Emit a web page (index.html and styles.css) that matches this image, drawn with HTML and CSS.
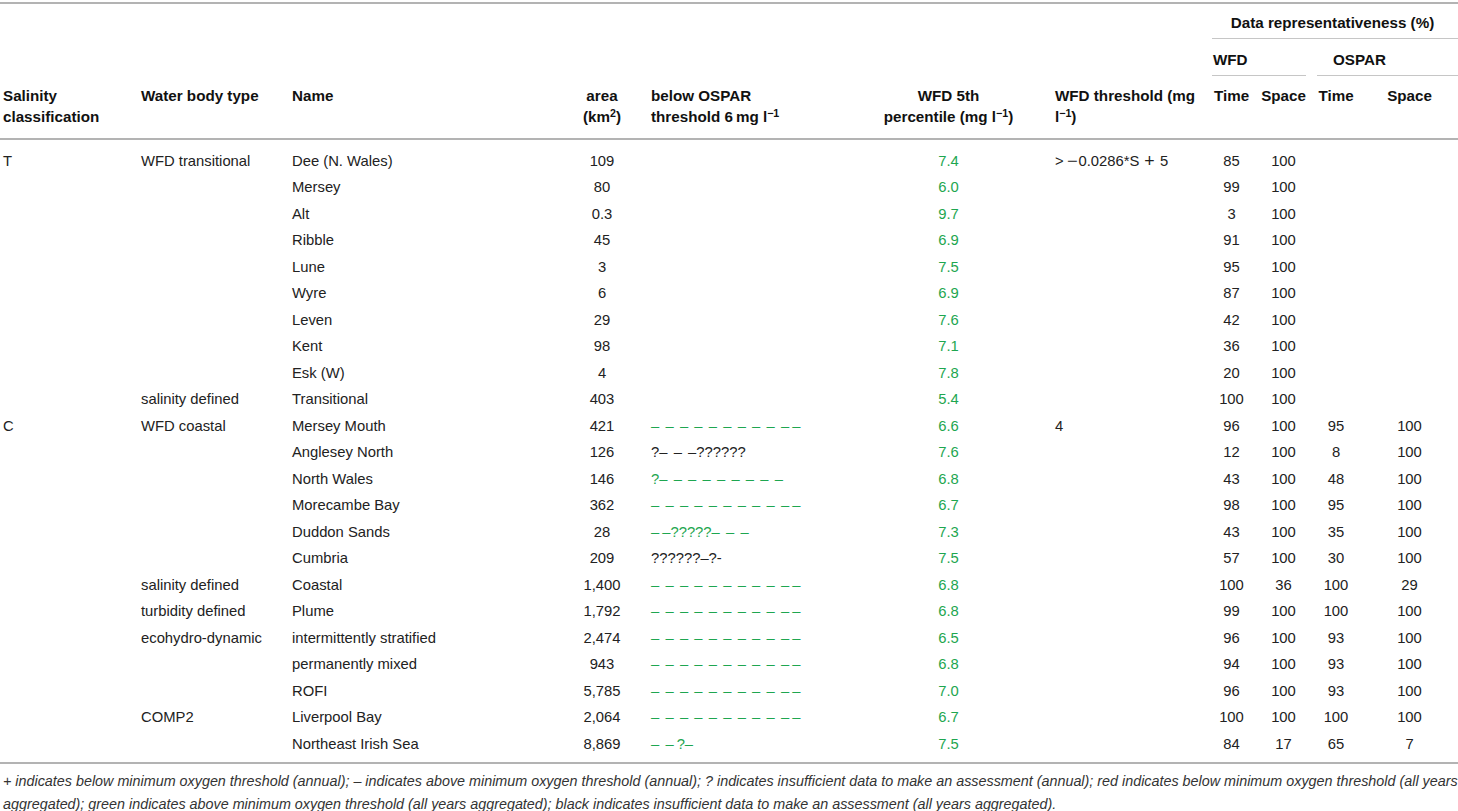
FILE: index.html
```html
<!DOCTYPE html>
<html lang="en">
<head>
<meta charset="utf-8">
<title>Table</title>
<link rel="stylesheet" href="styles.css">
</head>
<body>
<div class="page">
<table class="data">
<colgroup>
<col class="w1"><col class="w2"><col class="w3"><col class="w4"><col class="w5"><col class="w6"><col class="w7"><col class="w8"><col class="w9"><col class="w10"><col class="w11">
</colgroup>
<thead>
<tr class="hr1"><td colspan="7" rowspan="2" class="blank"></td><th colspan="4" class="rep">Data representativeness (%)</th></tr>
<tr class="hr2"><th colspan="2" class="grp-wfd">WFD</th><th colspan="2" class="grp-ospar">OSPAR</th></tr>
<tr class="hr3">
<th>Salinity<br>classification</th>
<th>Water body type</th>
<th>Name</th>
<th class="ctr">area<br>(km<sup>2</sup>)</th>
<th class="sym-h">below OSPAR<br>threshold 6&#8201;mg l<sup>−1</sup></th>
<th class="ctr">WFD 5th<br>percentile (mg l<sup>−1</sup>)</th>
<th>WFD threshold (mg<br>l<sup>−1</sup>)</th>
<th class="ctr">Time</th>
<th class="ctr">Space</th>
<th class="ctr">Time</th>
<th class="ctr">Space</th>
</tr>
</thead>
<tbody>
<tr class="first"><td>T</td><td>WFD transitional</td><td>Dee (N. Wales)</td><td class="ctr">109</td><td class="sym"></td><td class="ctr g">7.4</td><td>&gt; <span class="minus">−</span>0.0286*S<span class="op">+</span>5</td><td class="ctr">85</td><td class="ctr">100</td><td class="ctr"></td><td class="ctr"></td></tr>
<tr><td></td><td></td><td>Mersey</td><td class="ctr">80</td><td class="sym"></td><td class="ctr g">6.0</td><td></td><td class="ctr">99</td><td class="ctr">100</td><td class="ctr"></td><td class="ctr"></td></tr>
<tr><td></td><td></td><td>Alt</td><td class="ctr">0.3</td><td class="sym"></td><td class="ctr g">9.7</td><td></td><td class="ctr">3</td><td class="ctr">100</td><td class="ctr"></td><td class="ctr"></td></tr>
<tr><td></td><td></td><td>Ribble</td><td class="ctr">45</td><td class="sym"></td><td class="ctr g">6.9</td><td></td><td class="ctr">91</td><td class="ctr">100</td><td class="ctr"></td><td class="ctr"></td></tr>
<tr><td></td><td></td><td>Lune</td><td class="ctr">3</td><td class="sym"></td><td class="ctr g">7.5</td><td></td><td class="ctr">95</td><td class="ctr">100</td><td class="ctr"></td><td class="ctr"></td></tr>
<tr><td></td><td></td><td>Wyre</td><td class="ctr">6</td><td class="sym"></td><td class="ctr g">6.9</td><td></td><td class="ctr">87</td><td class="ctr">100</td><td class="ctr"></td><td class="ctr"></td></tr>
<tr><td></td><td></td><td>Leven</td><td class="ctr">29</td><td class="sym"></td><td class="ctr g">7.6</td><td></td><td class="ctr">42</td><td class="ctr">100</td><td class="ctr"></td><td class="ctr"></td></tr>
<tr><td></td><td></td><td>Kent</td><td class="ctr">98</td><td class="sym"></td><td class="ctr g">7.1</td><td></td><td class="ctr">36</td><td class="ctr">100</td><td class="ctr"></td><td class="ctr"></td></tr>
<tr><td></td><td></td><td>Esk (W)</td><td class="ctr">4</td><td class="sym"></td><td class="ctr g">7.8</td><td></td><td class="ctr">20</td><td class="ctr">100</td><td class="ctr"></td><td class="ctr"></td></tr>
<tr><td></td><td>salinity defined</td><td>Transitional</td><td class="ctr">403</td><td class="sym"></td><td class="ctr g">5.4</td><td></td><td class="ctr">100</td><td class="ctr">100</td><td class="ctr"></td><td class="ctr"></td></tr>
<tr><td>C</td><td>WFD coastal</td><td>Mersey Mouth</td><td class="ctr">421</td><td class="sym g">– – – – – – – – – –&#8201;–</td><td class="ctr g">6.6</td><td>4</td><td class="ctr">96</td><td class="ctr">100</td><td class="ctr">95</td><td class="ctr">100</td></tr>
<tr><td></td><td></td><td>Anglesey North</td><td class="ctr">126</td><td class="sym">?– – –??????</td><td class="ctr g">7.6</td><td></td><td class="ctr">12</td><td class="ctr">100</td><td class="ctr">8</td><td class="ctr">100</td></tr>
<tr><td></td><td></td><td>North Wales</td><td class="ctr">146</td><td class="sym g">?– – – – – – – – –</td><td class="ctr g">6.8</td><td></td><td class="ctr">43</td><td class="ctr">100</td><td class="ctr">48</td><td class="ctr">100</td></tr>
<tr><td></td><td></td><td>Morecambe Bay</td><td class="ctr">362</td><td class="sym g">– – – – – – – – – –&#8201;–</td><td class="ctr g">6.7</td><td></td><td class="ctr">98</td><td class="ctr">100</td><td class="ctr">95</td><td class="ctr">100</td></tr>
<tr><td></td><td></td><td>Duddon Sands</td><td class="ctr">28</td><td class="sym g">–&#8201;–?????– – –</td><td class="ctr g">7.3</td><td></td><td class="ctr">43</td><td class="ctr">100</td><td class="ctr">35</td><td class="ctr">100</td></tr>
<tr><td></td><td></td><td>Cumbria</td><td class="ctr">209</td><td class="sym">??????–?-</td><td class="ctr g">7.5</td><td></td><td class="ctr">57</td><td class="ctr">100</td><td class="ctr">30</td><td class="ctr">100</td></tr>
<tr><td></td><td>salinity defined</td><td>Coastal</td><td class="ctr">1,400</td><td class="sym g">– – – – – – – – – –&#8201;–</td><td class="ctr g">6.8</td><td></td><td class="ctr">100</td><td class="ctr">36</td><td class="ctr">100</td><td class="ctr">29</td></tr>
<tr><td></td><td>turbidity defined</td><td>Plume</td><td class="ctr">1,792</td><td class="sym g">– – – – – – – – – –&#8201;–</td><td class="ctr g">6.8</td><td></td><td class="ctr">99</td><td class="ctr">100</td><td class="ctr">100</td><td class="ctr">100</td></tr>
<tr><td></td><td>ecohydro-dynamic</td><td>intermittently stratified</td><td class="ctr">2,474</td><td class="sym g">– – – – – – – – – –&#8201;–</td><td class="ctr g">6.5</td><td></td><td class="ctr">96</td><td class="ctr">100</td><td class="ctr">93</td><td class="ctr">100</td></tr>
<tr><td></td><td></td><td>permanently mixed</td><td class="ctr">943</td><td class="sym g">– – – – – – – – – –&#8201;–</td><td class="ctr g">6.8</td><td></td><td class="ctr">94</td><td class="ctr">100</td><td class="ctr">93</td><td class="ctr">100</td></tr>
<tr><td></td><td></td><td>ROFI</td><td class="ctr">5,785</td><td class="sym g">– – – – – – – – – –&#8201;–</td><td class="ctr g">7.0</td><td></td><td class="ctr">96</td><td class="ctr">100</td><td class="ctr">93</td><td class="ctr">100</td></tr>
<tr><td></td><td>COMP2</td><td>Liverpool Bay</td><td class="ctr">2,064</td><td class="sym g">– – – – – – – – – –&#8201;–</td><td class="ctr g">6.7</td><td></td><td class="ctr">100</td><td class="ctr">100</td><td class="ctr">100</td><td class="ctr">100</td></tr>
<tr class="last"><td></td><td></td><td>Northeast Irish Sea</td><td class="ctr">8,869</td><td class="sym g">– –&#8201;?–</td><td class="ctr g">7.5</td><td></td><td class="ctr">84</td><td class="ctr">17</td><td class="ctr">65</td><td class="ctr">7</td></tr>
</tbody>
</table>
<p class="note">+ indicates below minimum oxygen threshold (annual); – indicates above minimum oxygen threshold (annual); ? indicates insufficient data to make an assessment (annual); red indicates below minimum oxygen threshold (all years<br>aggregated); green indicates above minimum oxygen threshold (all years aggregated); black indicates insufficient data to make an assessment (all years aggregated).</p>
</div>
</body>
</html>
```
FILE: styles.css
```css
html, body {
  margin: 0;
  padding: 0;
  background: #ffffff;
}

body {
  font-family: "Liberation Sans", Arial, Helvetica, sans-serif;
  color: #222222;
}

.page {
  width: 1458px;
  padding-top: 2px;
}

.data {
  width: 1458px;
  table-layout: fixed;
  border-collapse: separate;
  border-spacing: 0;
  border-top: 2px solid #b3b3b3;
  font-size: 14.8px;
}

.w1 { width: 138px; }
.w2 { width: 151px; }
.w3 { width: 271px; }
.w4 { width: 84px; }
.w5 { width: 201px; }
.w6 { width: 207px; }
.w7 { width: 155px; }
.w8 { width: 49px; }
.w9 { width: 55px; }
.w10 { width: 50px; }
.w11 { width: 97px; }

th {
  font-weight: bold;
  font-size: 15.2px;
  line-height: 21px;
  text-align: left;
  vertical-align: top;
  padding: 0 3px;
  color: #111111;
  white-space: nowrap;
}

.blank {
  padding: 0;
}

.hr1 th {
  padding-top: 8px;
  padding-bottom: 6px;
}

.hr2 th {
  padding-top: 10px;
  padding-bottom: 6px;
}

.hr3 th {
  padding-top: 9px;
  padding-bottom: 11px;
  border-bottom: 2px solid #b3b3b3;
}

.rep {
  text-align: center;
  background: linear-gradient(#c6c6c6, #c6c6c6) no-repeat right bottom / calc(100% - 5px) 1px;
}

.grp-wfd {
  padding-left: 6px;
  background: linear-gradient(#c6c6c6, #c6c6c6) no-repeat 5px 100% / calc(100% - 10px) 1px;
}

.grp-ospar {
  padding-left: 22px;
  background: linear-gradient(#c6c6c6, #c6c6c6) no-repeat right bottom / calc(100% - 6px) 1px;
}

sup {
  font-size: 0.7em;
  line-height: 0;
  vertical-align: 0.45em;
}

td {
  padding: 5.25px 3px;
  line-height: 16px;
  vertical-align: middle;
  white-space: nowrap;
  color: #222222;
}

.ctr {
  text-align: center;
}

.sym, .sym-h {
  padding-left: 7px;
}

.sym {
  word-spacing: 2.1px;
}

.minus {
  display: inline-block;
  transform: scaleX(1.25);
  margin-right: 2px;
}

.op {
  display: inline-block;
  margin: 0 6px;
  transform: scale(1.2);
}

.g {
  color: #1ea650;
}

tbody .first td {
  padding-top: 12.5px;
}

tbody .last td {
  padding-bottom: 10.5px;
  border-bottom: 2px solid #b3b3b3;
}

.note {
  margin: 6px 0 0;
  padding: 0 3px;
  font-size: 14.35px;
  line-height: 23px;
  font-style: italic;
  color: #333333;
  white-space: nowrap;
}
```
